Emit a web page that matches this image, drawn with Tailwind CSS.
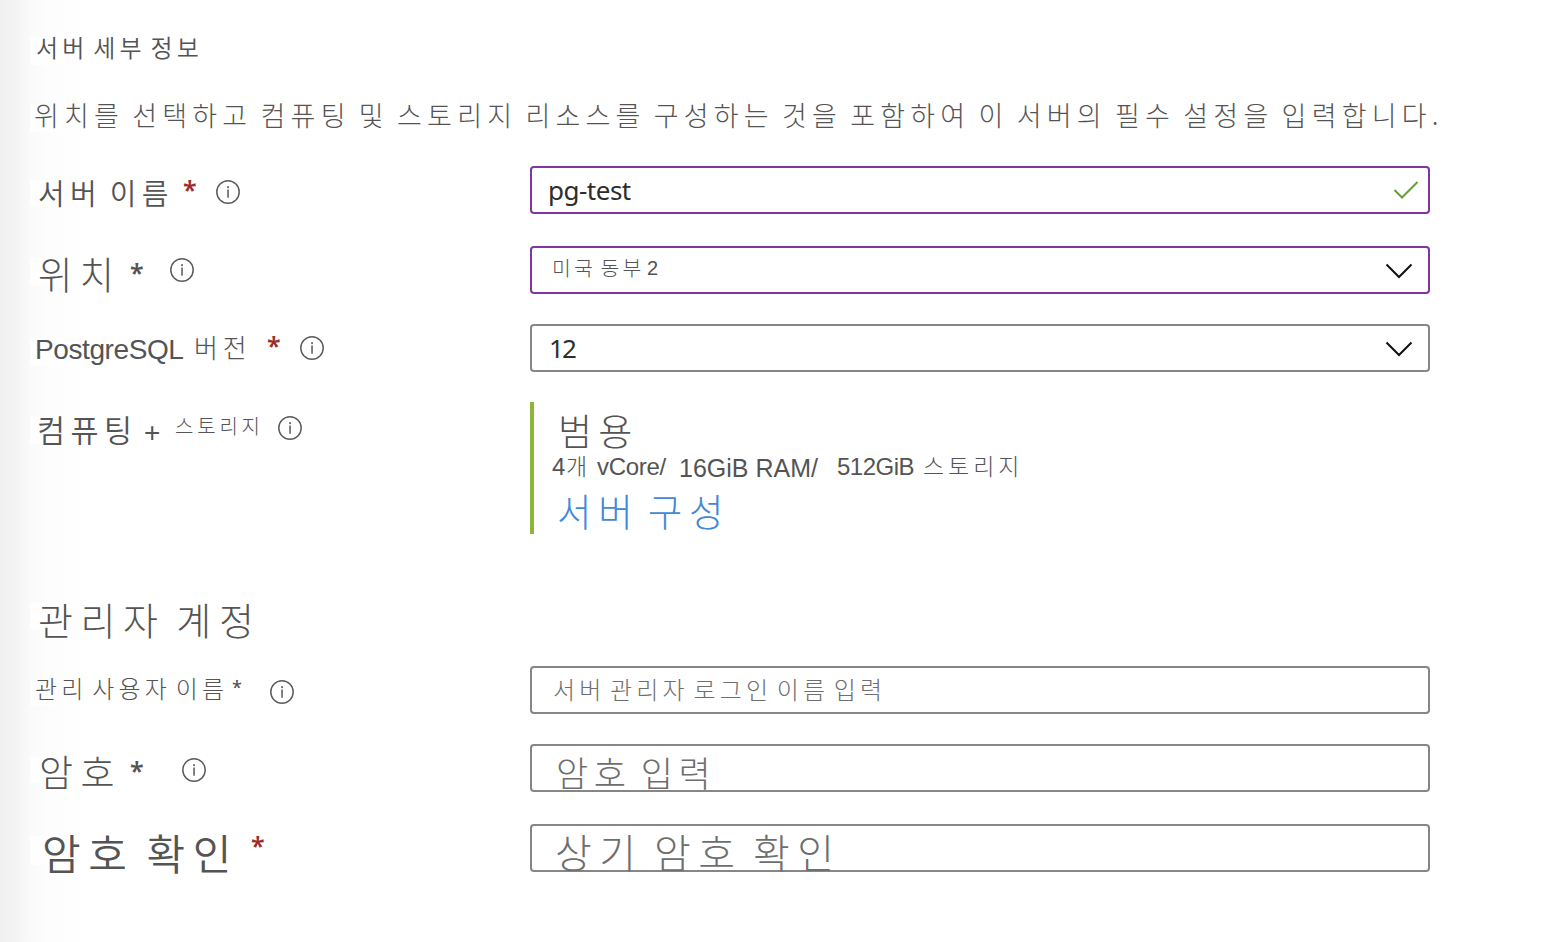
<!DOCTYPE html>
<html lang="ko">
<head>
<meta charset="utf-8">
<title>서버 세부 정보</title>
<script src="https://cdn.jsdelivr.net/npm/@tailwindcss/browser@4"></script>
</head>
<body class="h-[942px] w-[1554px] overflow-hidden bg-[linear-gradient(90deg,#f0f0f0_0px,#f3f3f3_14px,#fafafa_30px,#fdfdfd_50px,#fefefe_76px,#fff_90px)] bg-white font-['Noto_Sans_CJK_KR',sans-serif] text-[#545454]">
<svg class="hidden">
  <symbol id="info" viewBox="0 0 24 24"><circle cx="12" cy="12" r="11.2" fill="none" stroke="#5c5c5c" stroke-width="1.5"/><rect x="11.2" y="9.5" width="1.7" height="8.2" fill="#6c6c6c"/><rect x="11.1" y="6.2" width="1.9" height="1.9" fill="#6c6c6c"/></symbol>
  <symbol id="chevron" viewBox="0 0 28 16"><path d="M1.500 1.500 14 14 26.500 1.500" fill="none" stroke="#111" stroke-width="2"/></symbol>
</svg>
<main class="flex flex-col pl-[30px] pt-[37px]">
  <h2 class="flex h-[67px] items-start"><span class="h-7 w-[46px] shrink-0 bg-[#fefefe]"></span><span class="-ml-[40px] mt-[-2px] whitespace-nowrap text-[24px] leading-none font-[350] tracking-[0.178em] [word-spacing:-0.27em]">서버 세부 정보</span></h2>
  <p class="flex h-[62px] items-start"><span class="h-7 w-[46px] shrink-0 bg-[#fefefe]"></span><span class="-ml-[42px] mt-[-3px] whitespace-nowrap text-[27px] leading-none font-light tracking-[0.192em] [word-spacing:-0.168em]">위치를 선택하고 컴퓨팅 및 스토리지 리소스를 구성하는 것을 포함하여 이 서버의 필수 설정을 입력합니다.</span></p>

  <div class="flex h-20 items-start">
    <div class="flex w-[500px] items-start">
      <span class="mt-[14px] h-[26px] w-[46px] shrink-0 bg-[#fefefe]"></span>
      <span class="-ml-[38px] mt-[12px] w-[145px] whitespace-nowrap text-[29px] leading-none font-[350] tracking-[0.185em] [word-spacing:-0.2em]">서버 이름</span>
      <span class="mt-[11px] w-[33px] font-['Noto_Sans'] text-[25px] leading-none font-semibold text-[#9a2c2f]">*</span>
      <svg class="mt-[14px] size-6"><use href="#info"/></svg>
    </div>
    <div class="flex h-12 w-[900px] items-start justify-between rounded-[4px] border-2 border-[#8035a0] bg-white pl-4 pr-[9px]">
      <span class="mt-[9px] font-['Noto_Sans'] text-[26px] leading-none tracking-[-0.5px] text-[#2d2d2d]">pg-test</span>
      <svg class="mt-[12px] h-5 w-[26px]" viewBox="0 0 26 20"><path d="M1.500 10 9 17.500 24.500 2" fill="none" stroke="#63a033" stroke-width="2"/></svg>
    </div>
  </div>

  <div class="flex h-[78px] items-start">
    <div class="flex w-[500px] items-start">
      <span class="mt-[12px] h-[27px] w-[46px] shrink-0 bg-[#fefefe]"></span>
      <span class="-ml-[38px] mt-[8px] w-[92px] whitespace-nowrap text-[37.5px] leading-none font-light tracking-[0.19em]">위치</span>
      <span class="mt-[14px] w-[40px] font-['Noto_Sans'] text-[25px] leading-none font-semibold">*</span>
      <svg class="mt-[12px] size-6"><use href="#info"/></svg>
    </div>
    <div class="flex h-12 w-[900px] items-start justify-between rounded-[4px] border-2 border-[#8035a0] bg-white pl-5 pr-[15px]">
      <span class="flex items-start"><span class="mt-[9px] w-[95px] whitespace-nowrap text-[20.5px] leading-none font-light tracking-[0.15em] [word-spacing:-0.2em]">미국 동부</span><span class="mt-[10px] font-['Liberation_Sans'] text-[20px] leading-none">2</span></span>
      <svg class="mt-[15px] h-4 w-7"><use href="#chevron"/></svg>
    </div>
  </div>

  <div class="flex h-[78px] items-start">
    <div class="flex w-[500px] items-start">
      <span class="mt-[14px] h-7 w-[46px] shrink-0 bg-[#fefefe]"></span>
      <span class="-ml-[41px] mt-[12px] w-[159px] whitespace-nowrap font-['Liberation_Sans'] text-[28px] leading-none tracking-[-0.4px]">PostgreSQL</span>
      <span class="mt-[10px] w-[73px] whitespace-nowrap text-[26px] leading-none font-light tracking-[0.19em]">버전</span>
      <span class="mt-[9px] w-[33px] font-['Noto_Sans'] text-[25px] leading-none font-semibold text-[#9a2c2f]">*</span>
      <svg class="mt-[12px] size-6"><use href="#info"/></svg>
    </div>
    <div class="flex h-12 w-[900px] items-start justify-between rounded-[4px] border-2 border-[#868686] bg-white pl-[17px] pr-[15px]">
      <span class="mt-[9px] font-['Noto_Sans'] text-[26px] leading-none tracking-[-1.8px] text-[#2d2d2d]">12</span>
      <svg class="mt-[15px] h-4 w-7"><use href="#chevron"/></svg>
    </div>
  </div>

  <div class="flex h-[200px] items-start">
    <div class="flex w-[500px] items-start">
      <span class="mt-[14px] h-7 w-[46px] shrink-0 bg-[#fefefe]"></span>
      <span class="-ml-[39px] mt-[12px] w-[107px] whitespace-nowrap text-[30.5px] leading-none font-[350] tracking-[0.18em]">컴퓨팅</span>
      <span class="mt-[17px] w-[31px] font-['Liberation_Sans'] text-[28px] leading-none">+</span>
      <span class="mt-[14px] w-[103px] whitespace-nowrap text-[20px] leading-none font-light tracking-[0.19em]">스토리지</span>
      <svg class="mt-[14px] size-6"><use href="#info"/></svg>
    </div>
    <div class="flex h-[132px] flex-col border-l-4 border-[#8bb63a] pl-[18px]">
      <div class="h-[52px] pl-[6px] pt-[10px] text-[37px] leading-none font-light tracking-[0.17em]">범용</div>
      <div class="flex h-[36px] items-start whitespace-nowrap font-['Liberation_Sans'] leading-none">
        <span class="mt-[1px] w-[14px] text-[24px]">4</span>
        <span class="w-[31px] font-['Noto_Sans_CJK_KR'] text-[23px] font-light">개</span>
        <span class="mt-[1px] w-[82px] text-[24px] tracking-[-0.3px]">vCore/</span>
        <span class="mt-[2px] w-[158px] text-[25px]">16GiB RAM/</span>
        <span class="mt-[1px] w-[86px] text-[24px] tracking-[-0.5px]">512GiB</span>
        <span class="font-['Noto_Sans_CJK_KR'] text-[23px] font-light tracking-[0.17em]">스토리지</span>
      </div>
      <a class="whitespace-nowrap pl-[5px] pt-[1px] text-[37.5px] leading-none font-light tracking-[0.18em] text-[#4089d8] [word-spacing:-0.24em]">서버 구성</a>
    </div>
  </div>

  <h2 class="flex h-[64px] items-start"><span class="h-[27px] w-[46px] shrink-0 bg-[#fefefe]"></span><span class="-ml-[38px] mt-[-2px] whitespace-nowrap text-[38px] leading-none font-light tracking-[0.2em] [word-spacing:-0.2em]">관리자 계정</span></h2>

  <div class="flex h-[78px] items-start">
    <div class="flex w-[500px] items-start">
      <span class="mt-[14px] h-[26px] w-[46px] shrink-0 bg-[#fefefe]"></span>
      <span class="-ml-[41px] mt-[10px] w-[197px] whitespace-nowrap text-[24px] leading-none font-light tracking-[0.175em] [word-spacing:-0.26em]">관리 사용자 이름</span>
      <span class="mt-[12px] w-[38px] font-['Noto_Sans'] text-[18px] leading-none font-medium">*</span>
      <svg class="mt-[14px] size-6"><use href="#info"/></svg>
    </div>
    <div class="flex h-12 w-[900px] items-start rounded-[4px] border-2 border-[#868686] bg-white pl-[21px] text-[#6e6e6e]">
      <span class="mt-[9px] whitespace-nowrap text-[24px] leading-none font-light tracking-[0.173em] [word-spacing:-0.26em]">서버 관리자 로그인 이름 입력</span>
    </div>
  </div>

  <div class="flex h-20 items-start">
    <div class="flex w-[500px] items-start">
      <span class="mt-[13px] h-[26px] w-[46px] shrink-0 bg-[#fefefe]"></span>
      <span class="-ml-[37px] mt-[9px] w-[91px] whitespace-nowrap text-[37px] leading-none font-light tracking-[0.2em]">암호</span>
      <span class="mt-[14px] w-[52px] font-['Noto_Sans'] text-[25px] leading-none font-semibold">*</span>
      <svg class="mt-[14px] size-6"><use href="#info"/></svg>
    </div>
    <div class="flex h-12 w-[900px] items-start rounded-[4px] border-2 border-[#868686] bg-white pl-[24px] text-[#6e6e6e]">
      <span class="mt-[8px] whitespace-nowrap text-[35px] leading-none font-light tracking-[0.16em] [word-spacing:-0.18em]">암호 입력</span>
    </div>
  </div>

  <div class="flex h-20 items-start">
    <div class="flex w-[500px] items-start">
      <span class="mt-[12px] h-[29px] w-[46px] shrink-0 bg-[#fefefe]"></span>
      <span class="-ml-[34px] mt-[7px] w-[209px] whitespace-nowrap text-[42px] leading-none font-[350] tracking-[0.18em] [word-spacing:-0.17em]">암호 확인</span>
      <span class="mt-[9px] font-['Noto_Sans'] text-[25px] leading-none font-semibold text-[#9a2c2f]">*</span>
    </div>
    <div class="flex h-12 w-[900px] items-start rounded-[4px] border-2 border-[#868686] bg-white pl-[23px] text-[#6e6e6e]">
      <span class="mt-[5px] whitespace-nowrap text-[40px] leading-none font-light tracking-[0.185em] [word-spacing:-0.2em]">상기 암호 확인</span>
    </div>
  </div>
</main>
</body>
</html>
